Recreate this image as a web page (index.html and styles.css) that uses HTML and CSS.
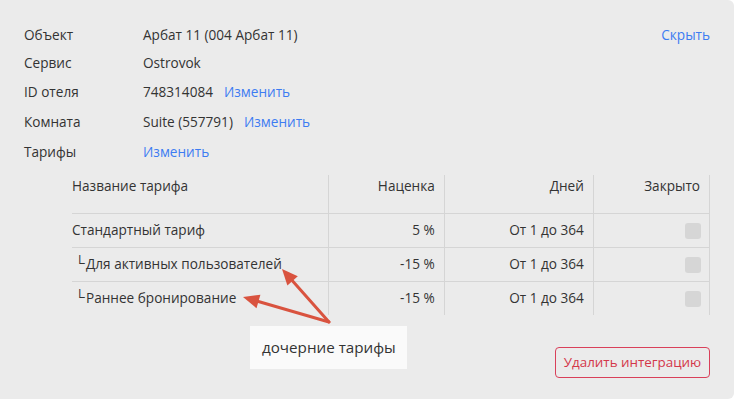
FILE: index.html
```html
<!DOCTYPE html>
<html lang="ru">
<head>
<meta charset="utf-8">
<link rel="stylesheet" href="styles.css">
</head>
<body>
<div class="card">
  <div class="info">
    <div class="row r1"><span class="label">Объект</span><span class="value">Арбат 11 (004 Арбат 11)</span><a class="link hide">Скрыть</a></div>
    <div class="row r2"><span class="label">Сервис</span><span class="value">Ostrovok</span></div>
    <div class="row r3"><span class="label">ID отеля</span><span class="value">748314084</span><a class="link">Изменить</a></div>
    <div class="row r3"><span class="label">Комната</span><span class="value">Suite (557791)</span><a class="link">Изменить</a></div>
    <div class="row r3"><span class="label">Тарифы</span><a class="link first">Изменить</a></div>
  </div>
  <table class="rates">
    <thead>
      <tr><th class="c-name">Название тарифа</th><th class="c-num">Наценка</th><th class="c-days">Дней</th><th class="c-closed">Закрыто</th></tr>
    </thead>
    <tbody>
      <tr><td class="c-name">Стандартный тариф</td><td class="c-num">5 %</td><td class="c-days">От 1 до 364</td><td class="c-closed"><span class="chk"></span></td></tr>
      <tr><td class="c-name"><span class="tree">└</span>Для активных пользователей</td><td class="c-num">-15 %</td><td class="c-days">От 1 до 364</td><td class="c-closed"><span class="chk"></span></td></tr>
      <tr><td class="c-name"><span class="tree">└</span>Раннее бронирование</td><td class="c-num">-15 %</td><td class="c-days">От 1 до 364</td><td class="c-closed"><span class="chk"></span></td></tr>
    </tbody>
  </table>
  <div class="footer"><button class="danger">Удалить интеграцию</button></div>
  <div class="note">дочерние тарифы</div>
  <svg class="arrows" width="737" height="401" viewBox="0 0 737 401">
    <g stroke="#d9533f" stroke-width="3" stroke-linecap="round" fill="none">
      <line x1="329" y1="322" x2="292.6" y2="281"/>
      <line x1="329" y1="322" x2="258.4" y2="301.5"/>
    </g>
    <g fill="#d9533f">
      <polygon points="282,269 297.8,276.3 287.4,285.6"/>
      <polygon points="243,297 260.4,294.8 256.5,308.2"/>
    </g>
  </svg>
</div>
</body>
</html>
```
FILE: styles.css
```css
html, body {
  margin: 0;
  padding: 0;
  background: #ffffff;
}
body {
  font-family: "Open Sans", "Liberation Sans", sans-serif;
  font-size: 13.6px;
  color: #333333;
}
.card {
  position: relative;
  box-sizing: border-box;
  width: 734px;
  height: 399px;
  background: #ebebeb;
  border-radius: 0 6px 6px 0;
  padding: 21px 24px 0 24px;
}
.info {
  display: flex;
  flex-direction: column;
}
.row {
  display: flex;
  align-items: center;
}
.r1 { height: 27px; }
.r2 { height: 28px; }
.r3 { height: 30px; }
.label {
  width: 119px;
  flex: none;
}
.value {
  margin-right: 11px;
}
.link {
  color: #3d7cf2;
  cursor: pointer;
}
.hide {
  margin-left: auto;
}
.rates {
  margin: 9px 0 0 48px;
  width: 638px;
  border-collapse: collapse;
  table-layout: fixed;
}
.rates th {
  font-weight: normal;
  height: 38px;
  box-sizing: border-box;
  vertical-align: top;
  padding: 1px 9px 0 0;
  line-height: 20px;
  border-right: 1px solid #d5d5d5;
  border-bottom: 1px solid #d5d5d5;
}
.rates td {
  height: 33px;
  padding: 0 9px 0 0;
  line-height: 20px;
  vertical-align: middle;
  border-right: 1px solid #d5d5d5;
  border-bottom: 1px solid #d5d5d5;
}
.rates tbody tr:last-child td {
  border-bottom: none;
}
.c-name { width: 256px; text-align: left; }
.c-num { width: 116px; text-align: right; }
.c-days { width: 149px; text-align: right; }
.c-closed { width: 116px; text-align: right; }
.rates td.c-closed { padding-right: 8px; }
.rates td.c-name, .rates th.c-name { padding-left: 0; }
.tree {
  display: inline-block;
  margin-left: 3px;
  width: 11px;
  font-size: 14px;
  position: relative;
  top: -1px;
}
.chk {
  display: inline-block;
  width: 16px;
  height: 16px;
  border-radius: 3px;
  background: #d6d6d6;
  vertical-align: middle;
}
.footer {
  display: flex;
  justify-content: flex-end;
  margin-top: 32px;
}
.danger {
  font-family: "Open Sans", "Liberation Sans", sans-serif;
  font-size: 13.4px;
  color: #d4374a;
  background: transparent;
  border: 1px solid #d9405a;
  border-radius: 4px;
  height: 31px;
  width: 155px;
  padding: 0;
}
.note {
  position: absolute;
  left: 250px;
  top: 326px;
  width: 157px;
  height: 43px;
  box-sizing: border-box;
  background: #fafafa;
  padding-left: 12px;
  line-height: 43px;
  font-size: 15.2px;
  color: #333333;
}
.arrows {
  position: absolute;
  left: 0;
  top: 0;
  pointer-events: none;
}
```
